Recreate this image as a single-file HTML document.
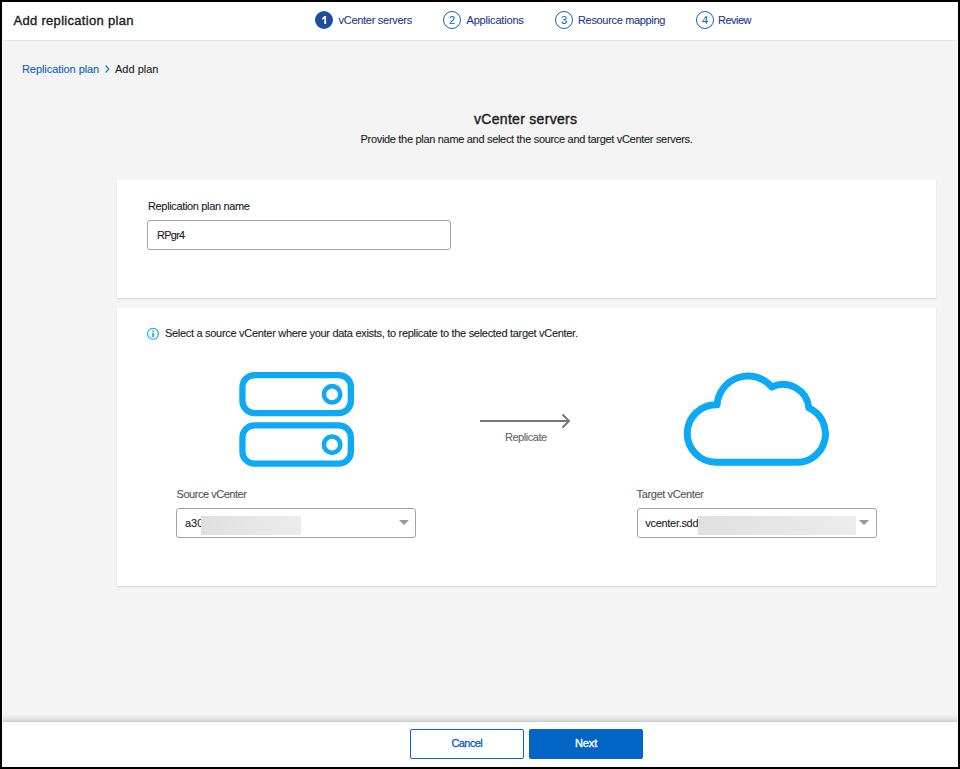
<!DOCTYPE html>
<html>
<head>
<meta charset="utf-8">
<style>
html,body{margin:0;padding:0;}
body{width:960px;height:769px;position:relative;overflow:hidden;background:#000;font-family:"Liberation Sans",sans-serif;}
.abs{position:absolute;}
.t{position:absolute;white-space:nowrap;line-height:13px;font-size:11px;-webkit-text-stroke-width:0.1px;}
#win{position:absolute;left:2px;top:2px;width:956px;height:765px;background:#fff;overflow:hidden;}
#body{position:absolute;left:1px;top:39px;width:954px;height:681px;background:#f4f4f4;}
#hdrline{position:absolute;left:1px;top:38px;width:954px;height:1px;background:#e3e3e3;}
#footshadow{position:absolute;left:1px;top:712px;width:954px;height:8px;background:linear-gradient(to bottom,rgba(0,0,0,0),rgba(0,0,0,0.07) 60%,rgba(0,0,0,0.17));}
.card{position:absolute;background:#fff;box-shadow:0 1px 1.5px rgba(0,0,0,0.13);}
.circ{position:absolute;width:16px;height:16px;border:1.2px solid #0a64c8;border-radius:50%;box-sizing:content-box;}
.num{position:absolute;font-size:11px;line-height:13px;color:#0a5fc0;}
.step{color:#1a3a8c;}
.field{position:absolute;box-sizing:border-box;border:1px solid #a3a3a3;border-radius:3px;background:#fff;}
.redact{position:absolute;background:linear-gradient(to right,#e0e0e0,#ececec);}
.tri{position:absolute;width:0;height:0;border-left:5px solid transparent;border-right:5px solid transparent;border-top:5px solid #9a9a9a;}
.btn{position:absolute;box-sizing:border-box;border-radius:2px;}
</style>
</head>
<body>
<div id="win">
  <div id="body"></div>
  <div id="hdrline"></div>

  <!-- header title -->
  <div class="t" style="left:11.5px;top:11px;font-size:13px;line-height:16px;font-weight:400;color:#1b1b1b;letter-spacing:0.3px;-webkit-text-stroke:0.35px #1b1b1b;">Add replication plan</div>

  <!-- stepper -->
  <div class="abs" style="left:313px;top:9px;width:18px;height:18px;border-radius:50%;background:#0a5ec0;"></div>
  <div class="abs" style="left:314px;top:10px;width:16px;height:16px;border-radius:50%;background:#234b97;"></div>
  <svg class="abs" style="left:0;top:0;" width="400" height="40" viewBox="2 2 400 40"><path d="M321.9 18.3 L324.6 15.9 L326.1 15.9 L326.1 24 L324.3 24 L324.3 18.4 L322.7 19.7 Z" fill="#fff"/></svg>
  <div class="t step" style="left:336.5px;top:12px;letter-spacing:-0.28px;">vCenter servers</div>

  <div class="circ" style="left:440.8px;top:8.8px;"></div>
  <div class="num" style="left:447px;top:12px;">2</div>
  <div class="t step" style="left:464.5px;top:12px;letter-spacing:-0.18px;">Applications</div>

  <div class="circ" style="left:552.8px;top:8.8px;"></div>
  <div class="num" style="left:559px;top:12px;">3</div>
  <div class="t step" style="left:576px;top:12px;letter-spacing:-0.33px;">Resource mapping</div>

  <div class="circ" style="left:693.8px;top:8.8px;"></div>
  <div class="num" style="left:700px;top:12px;">4</div>
  <div class="t step" style="left:716px;top:12px;letter-spacing:-0.5px;">Review</div>

  <!-- breadcrumb -->
  <div class="t" style="left:20px;top:61px;color:#0b62c4;letter-spacing:-0.07px;">Replication plan</div>
  <svg class="abs" style="left:100px;top:62px;" width="10" height="12" viewBox="0 0 10 12"><path d="M3.6 1.5 L6.9 5 L3.6 8.5" fill="none" stroke="#1a6fcc" stroke-width="1.15"/></svg>
  <div class="t" style="left:113px;top:61px;color:#1b1b1b;">Add plan</div>

  <!-- heading -->
  <div class="t" style="left:472px;top:109px;font-size:14px;line-height:16px;font-weight:400;color:#1b1b1b;letter-spacing:0.3px;-webkit-text-stroke:0.4px #1b1b1b;">vCenter servers</div>
  <div class="t" style="left:358.5px;top:131px;color:#1b1b1b;letter-spacing:-0.31px;">Provide the plan name and select the source and target vCenter servers.</div>

  <!-- card 1 -->
  <div class="card" style="left:115px;top:178px;width:819px;height:118px;"></div>
  <div class="t" style="left:146px;top:198px;color:#1b1b1b;letter-spacing:-0.35px;">Replication plan name</div>
  <div class="field" style="left:145px;top:218px;width:304px;height:30px;"></div>
  <div class="t" style="left:155px;top:227px;color:#1b1b1b;letter-spacing:-0.75px;">RPgr4</div>

  <!-- card 2 -->
  <div class="card" style="left:115px;top:306px;width:819px;height:278px;"></div>
  <svg class="abs" style="left:144px;top:325px;" width="14" height="14" viewBox="0 0 14 14">
    <circle cx="7" cy="6.8" r="5.45" fill="none" stroke="#14b4f4" stroke-width="1.2"/>
    <rect x="6.1" y="6" width="1.8" height="4" fill="#14b4f4"/>
    <rect x="6.1" y="3.6" width="1.8" height="1.3" fill="#14b4f4"/>
  </svg>
  <div class="t" style="left:163px;top:325px;color:#1b1b1b;letter-spacing:-0.3px;">Select a source vCenter where your data exists, to replicate to the selected target vCenter.</div>

  <!-- server icon -->
  <svg class="abs" style="left:0;top:0;" width="956" height="765" viewBox="2 2 956 765">
    <g fill="none" stroke="#0da9f5" stroke-width="5.7">
      <rect x="242.45" y="375.05" width="108.4" height="38.0" rx="12" ry="12" stroke-width="6.3"/>
      <rect x="242.45" y="425.35" width="108.4" height="38.3" rx="12" ry="12" stroke-width="6.3"/>
      <circle cx="332.1" cy="394.3" r="8.2" stroke-width="4.6"/>
      <circle cx="332.1" cy="444.7" r="8.2" stroke-width="4.6"/>
      <path d="M716 462.25 A28.75 28.75 0 1 1 717.07 404.77 A31 31 0 0 1 771.74 387.06 A26 26 0 0 1 808.86 407.84 A28.5 28.5 0 0 1 797 462.25 Z" stroke-width="7" stroke-linejoin="round"/>
    </g>
    <g fill="none" stroke="#777" stroke-width="2">
      <path d="M480 421 L569 421"/>
      <path d="M562.5 414.5 L569 421 L562.5 427.5"/>
    </g>
  </svg>
  <div class="t" style="left:503px;top:429px;color:#666;letter-spacing:-0.47px;">Replicate</div>

  <!-- source -->
  <div class="t" style="left:174.5px;top:486px;color:#555;letter-spacing:-0.46px;">Source vCenter</div>
  <div class="field" style="left:174px;top:506px;width:240px;height:30px;"></div>
  <div class="t" style="left:183px;top:515px;color:#1b1b1b;">a30</div>
  <div class="redact" style="left:199px;top:514px;width:100px;height:19px;"></div>
  <div class="tri" style="left:397px;top:518px;"></div>

  <!-- target -->
  <div class="t" style="left:634.5px;top:486px;color:#555;letter-spacing:-0.37px;">Target vCenter</div>
  <div class="field" style="left:635px;top:506px;width:240px;height:30px;"></div>
  <div class="t" style="left:643.3px;top:515px;color:#1b1b1b;letter-spacing:-0.3px;">vcenter.sdd</div>
  <div class="redact" style="left:696px;top:514px;width:158px;height:19px;"></div>
  <div class="tri" style="left:857px;top:518px;"></div>

  <!-- footer -->
  <div id="footshadow"></div>
  <div class="btn" style="left:408px;top:727px;width:114px;height:30px;border:1.2px solid #0a64c8;background:#fff;"></div>
  <div class="t" style="left:449.5px;top:735px;color:#0a5fc0;letter-spacing:-0.6px;-webkit-text-stroke:0.3px #0a5fc0;">Cancel</div>
  <div class="btn" style="left:527px;top:727px;width:114px;height:30px;background:#0065c4;"></div>
  <div class="t" style="left:573px;top:735px;color:#fff;letter-spacing:-0.1px;-webkit-text-stroke:0.35px #fff;">Next</div>
</div>
</body>
</html>
